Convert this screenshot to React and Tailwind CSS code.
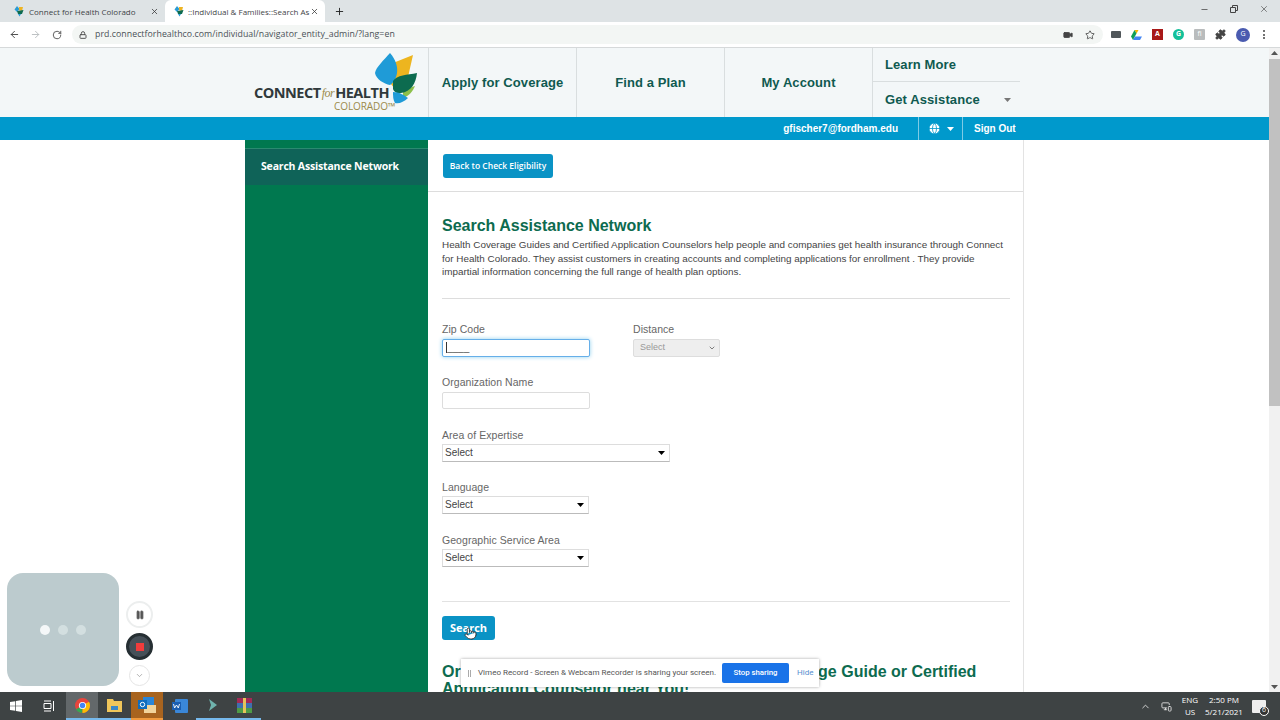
import { ArrowLeft, ArrowRight, RotateCw, Lock, Star, Video, Puzzle, X, Plus, Minus, ChevronUp, ChevronDown, Globe, Pause, MonitorSmartphone, Pointer } from "lucide-react";

const Favicon = () => (
  <svg width="10" height="11" viewBox="0 0 10 11" className="shrink-0">
    <path d="M3 0 L5.5 3 L3 6 L0.5 3.5 Z" fill="#2a9bd3" />
    <path d="M5 1 L9 1 L8 5 L5 4 Z" fill="#eeb422" />
    <path d="M3 5 L9.5 4 L8 8 L4 8 Z" fill="#0d6b50" />
    <path d="M4 8 L7 8 L5.5 10.5 Z" fill="#2a9bd3" />
  </svg>
);

const Logo = () => (
  <div className="relative h-full w-[183px]">
    <svg width="48" height="55" viewBox="0 0 48 55" className="absolute left-[128px] top-[5px]">
      <path d="M20 10 L40 2 L35 24 L22 36 L17 30 Z" fill="#edb51f" />
      <path d="M17 0 C23 7 25 14 24 20 C23 26 20 30 17 32 C11 31 3 26 2 20 C3 14 11 7 17 0 Z" fill="#1f9bd7" />
      <path d="M30 37 L42 33 C40 38 36 43 30 45 Z" fill="#8cc04b" />
      <path d="M20 28 C24 22 34 22 44 20 C43 30 38 39 28 40 C24 41 21 39 20 36 Z" fill="#0c6b4f" />
      <path d="M20 39 C26 39 31 42 35 45 C31 49 26 51 22 50 C20 47 20 43 20 39 Z" fill="#1f9bd7" />
    </svg>
    <div className="absolute left-[9px] top-[36px] flex items-center whitespace-nowrap font-['Open_Sans',sans-serif] text-[14.5px] font-bold leading-[18px] tracking-[-0.5px] text-[#30393b]">
      CONNECT
      <span className="mx-[1px] font-['Liberation_Serif',serif] text-[12px] font-normal italic tracking-[-0.5px] text-[#9b8a4a]">for</span>
      HEALTH
    </div>
    <div className="absolute left-[89px] top-[52px] whitespace-nowrap font-['Open_Sans',sans-serif] text-[10px] font-normal leading-[12px] tracking-[-0.1px] text-[#9b8a4a]">COLORADO™</div>
  </div>
);

const NavItem = ({ children }) => (
  <div className="flex w-[148px] items-center justify-center border-l border-[#d9dedf] text-[13px] font-bold tracking-[0.1px] text-[#0f5a50]">{children}</div>
);

const Caret = ({ className }) => (
  <svg width="7" height="4" viewBox="0 0 7 4" className={className}>
    <path d="M0 0 H7 L3.5 4 Z" fill="currentColor" />
  </svg>
);

const Label = ({ children }) => <div className="text-[10.5px] leading-[13px] tracking-[0.05px] text-[#666]">{children}</div>;

const FakeSelect = ({ width }) => (
  <div className={`mt-[2px] flex h-[18px] ${width} items-center justify-between border border-[#ddd] border-b-[#bbb] bg-white pr-[4px] pl-[2px]`}>
    <span className="pb-[1px] text-[10px] leading-[13px] text-[#444]">Select</span>
    <Caret className="text-black" />
  </div>
);

const ChromeBar = () => (
  <div className="font-['Open_Sans',sans-serif]">
    <div className="flex h-[22px] items-end bg-[#dee3e5] pl-[8px] text-[8px] text-[#5c6063]">
      <div className="flex h-[22px] w-[157px] items-center gap-[5px] pl-[6px] pt-[1px]">
        <Favicon />
        <span className="w-[116px] whitespace-nowrap text-[#3f4447]">Connect for Health Colorado</span>
        <X size={9} strokeWidth={2} className="text-[#333]" />
      </div>
      <div className="flex h-[22px] w-[160px] items-center gap-[4px] rounded-t-[6px] bg-white pl-[9px] pt-[1px]">
        <Favicon />
        <span className="w-[118px] whitespace-nowrap text-[#3f4447]">::Individual &amp; Families::Search As</span>
        <X size={9} strokeWidth={2} className="text-[#333]" />
      </div>
      <Plus size={11} strokeWidth={2} className="mb-[5px] ml-[9px] text-[#222]" />
      <div className="ml-auto flex h-[22px] items-center gap-[21px] pb-[4px] pr-[8px] text-[#444]">
        <Minus size={9} />
        <svg width="8" height="8" viewBox="0 0 8 8" fill="none" stroke="currentColor"><path d="M0.5 2.5 H5.5 V7.5 H0.5 Z M2.5 2.5 V0.5 H7.5 V5.5 H5.5" /></svg>
        <X size={10} strokeWidth={1.5} className="mr-[3px]" />
      </div>
    </div>
    <div className="flex h-[26px] items-center border-b border-[#d6d9da] bg-white pl-[9px] pr-[10px] text-[#5f6368]">
      <ArrowLeft size={11} strokeWidth={2} className="text-[#444]" />
      <ArrowRight size={11} strokeWidth={2} className="ml-[10px] text-[#b8bcbe]" />
      <RotateCw size={10} strokeWidth={2} className="ml-[11px] text-[#444]" />
      <div className="ml-[10px] flex h-[19px] w-[1031px] items-center rounded-full bg-[#f3f6f4] pl-[7px] pr-[8px]">
        <Lock size={8} strokeWidth={3} className="text-[#555]" />
        <span className="ml-[8px] text-[8.75px] tracking-[0.05px] text-[#4a5056]">prd.connectforhealthco.com/individual/navigator_entity_admin/?lang=en</span>
        <Video size={10} fill="currentColor" className="ml-auto text-[#444]" />
        <Star size={10} strokeWidth={2} className="ml-[12px] text-[#444]" />
      </div>
      <div className="ml-[8px] flex items-center gap-[10px]">
        <div className="h-[7px] w-[10px] rounded-[1px] bg-[#50565a]" />
        <svg width="11" height="10" viewBox="0 0 11 10"><path d="M3.5 0 H7.5 L5.5 3.5 Z" fill="#f4b400" /><path d="M3.5 0 L0 6.5 L2 10 L5.5 3.5 Z" fill="#0f9d58" /><path d="M2 10 H9 L11 6.5 H4 Z" fill="#4285f4" /></svg>
        <div className="flex h-[11px] w-[11px] items-center justify-center bg-[#a81818] text-[7px] font-bold text-white">A</div>
        <div className="flex h-[11px] w-[11px] items-center justify-center rounded-full bg-[#14c09a] text-[7px] font-bold text-white">G</div>
        <div className="flex h-[11px] w-[11px] items-center justify-center rounded-[1px] bg-[#b9bcbd] text-[7px] text-white">fi</div>
        <Puzzle size={11} fill="currentColor" className="text-[#444]" />
        <div className="flex h-[14px] w-[14px] items-center justify-center rounded-full bg-[#4a5bb0] text-[7px] text-white">G</div>
        <div className="ml-[3px] flex flex-col gap-[1.5px]">
          <div className="h-[2px] w-[2px] rounded-full bg-[#444]" />
          <div className="h-[2px] w-[2px] rounded-full bg-[#444]" />
          <div className="h-[2px] w-[2px] rounded-full bg-[#444]" />
        </div>
      </div>
    </div>
  </div>
);

const SiteHeader = () => (
  <>
    <div className="h-[69px] bg-[#f3f7f8]">
      <div className="mx-auto flex h-full w-[779px]">
        <Logo />
        <NavItem>Apply for Coverage</NavItem>
        <NavItem>Find a Plan</NavItem>
        <NavItem>My Account</NavItem>
        <div className="flex w-[148px] flex-col border-l border-[#d9dedf] text-[13px] font-bold tracking-[0.1px] text-[#0f5a50]">
          <div className="flex h-[34px] items-center border-b border-[#d9dedf] pl-[12px]">Learn More</div>
          <div className="flex flex-1 items-center justify-between pl-[12px] pr-[9px]">
            Get Assistance
            <Caret className="text-[#777]" />
          </div>
        </div>
      </div>
    </div>
    <div className="h-[23px] bg-[#0099cc] text-[10px] font-bold text-white">
      <div className="mx-auto flex h-full w-[779px] justify-end">
        <div className="flex items-center pr-[20px]">gfischer7@fordham.edu</div>
        <div className="flex w-[44px] items-center gap-[6px] border-l border-[#7fcbe5] pl-[9px]">
          <Globe size={13} fill="#fff" stroke="#0099cc" strokeWidth={1.5} />
          <Caret />
        </div>
        <div className="flex w-[62px] items-center border-l border-[#7fcbe5] pl-[11px]">Sign Out</div>
      </div>
    </div>
  </>
);

const Sidebar = () => (
  <div className="w-[183px] shrink-0 bg-[#00784f] pt-[8px]">
    <div className="flex h-[37px] items-center border-t border-[#2b8a70] bg-[#0f6358] pl-[16px] font-['Open_Sans',sans-serif] text-[10.5px] font-bold tracking-[-0.18px] text-white">
      Search Assistance Network
    </div>
  </div>
);

const Form = () => (
  <div className="min-w-0 flex-1 border-r border-[#e3e3e3]">
    <div className="flex h-[52px] items-start border-b border-[#ddd] pl-[15px] pt-[14px]">
      <button className="h-[24px] w-[110px] rounded-[3px] bg-[#0a93c5] font-['Open_Sans',sans-serif] text-[8.5px] font-semibold text-white">
        Back to Check Eligibility
      </button>
    </div>
    <div className="pl-[14px] pr-[13px]">
      <h1 className="mt-[24px] text-[16px] font-bold leading-[19px] text-[#0d6b4f]">Search Assistance Network</h1>
      <p className="mt-[3px] text-[9.9px] leading-[13.5px] text-[#444]">
        Health Coverage Guides and Certified Application Counselors help people and companies get health insurance through Connect for Health Colorado. They assist customers in creating accounts and completing applications for enrollment . They provide impartial information concerning the full range of health plan options.
      </p>
      <div className="mt-[19px] h-px bg-[#ddd]" />

      <div className="mt-[24px] flex">
        <div className="w-[191px]">
          <Label>Zip Code</Label>
          <div className="mt-[3px] flex h-[18px] w-[148px] items-center rounded-[2px] border border-[#66afe9] bg-white pl-[3px] shadow-[0_0_4px_#8fd0ee]">
            <span className="border-l border-[#333] text-[10px] leading-[11px] text-[#555]">____</span>
          </div>
        </div>
        <div>
          <Label>Distance</Label>
          <div className="mt-[3px] flex h-[18px] w-[87px] items-center justify-between rounded-[2px] border border-[#ddd] bg-[#eee] pl-[6px] pr-[3px] text-[9px] text-[#999]">
            Select
            <ChevronDown size={8} strokeWidth={2.5} className="text-[#666]" />
          </div>
        </div>
      </div>

      <div className="mt-[19px]">
        <Label>Organization Name</Label>
        <div className="mt-[3px] h-[17px] w-[148px] rounded-[2px] border border-[#ddd] bg-white" />
      </div>
      <div className="mt-[20px]">
        <Label>Area of Expertise</Label>
        <FakeSelect width="w-[228px]" />
      </div>
      <div className="mt-[19px]">
        <Label>Language</Label>
        <FakeSelect width="w-[147px]" />
      </div>
      <div className="mt-[20px]">
        <Label>Geographic Service Area</Label>
        <FakeSelect width="w-[147px]" />
      </div>

      <div className="mt-[34px] h-px bg-[#e2e2e2]" />
      <div className="relative mt-[13px] h-[24px] w-[53px]">
        <button className="h-full w-full rounded-[3px] bg-[#0a93c5] font-['Open_Sans',sans-serif] text-[11px] font-bold text-white">Search</button>
        <Pointer size={13} fill="#fff" stroke="#222" strokeWidth={1.5} className="absolute left-[22px] top-[12px]" />
      </div>
      <h2 className="mt-[24px] w-[560px] text-[16px] font-bold leading-[17px] text-[#0d6b4f]">
        Or use our map here to find a local Health Coverage Guide or Certified Application Counselor near You!
      </h2>
    </div>
  </div>
);

const Recorder = () => (
  <div className="absolute left-[7px] top-[573px] flex items-end">
    <div className="flex h-[113px] w-[112px] items-center justify-center gap-[8px] rounded-[16px] bg-[#bccbce]">
      <div className="h-[10px] w-[10px] rounded-full bg-[#f4f7f8]" />
      <div className="h-[10px] w-[10px] rounded-full bg-[#d3dfe0]" />
      <div className="h-[10px] w-[10px] rounded-full bg-[#d3dfe0]" />
    </div>
    <div className="ml-[7px] flex flex-col items-center gap-[5px]">
      <div className="flex h-[27px] w-[27px] items-center justify-center rounded-full border-2 border-[#eceeee] bg-white">
        <Pause size={10} fill="#555" stroke="#555" />
      </div>
      <div className="flex h-[27px] w-[27px] items-center justify-center rounded-full border-[3px] border-[#262f33] bg-[#465058]">
        <div className="h-[8px] w-[8px] bg-[#f03c3c]" />
      </div>
      <div className="flex h-[21px] w-[21px] items-center justify-center rounded-full border border-[#e5e5e5] bg-white">
        <ChevronDown size={9} className="text-[#999]" />
      </div>
    </div>
  </div>
);

const SharingBar = () => (
  <div className="absolute left-[461px] top-[659px] flex h-[28px] w-[358px] items-center bg-white pl-[7px] font-['Roboto',sans-serif] text-[8.05px] text-[#555] shadow-[0_0_3px_rgba(0,0,0,0.35)]">
    <div className="h-[7px] w-[3px] shrink-0 border-x border-[#aaa]" />
    <span className="ml-[7px] w-[244px] shrink-0 whitespace-nowrap">Vimeo Record - Screen &amp; Webcam Recorder is sharing your screen.</span>
    <button className="h-[20px] w-[67px] shrink-0 rounded-[2px] bg-[#1a73e8] text-[7.8px] font-medium text-white">Stop sharing</button>
    <span className="ml-[8px] text-[#5a8fd0]">Hide</span>
  </div>
);

const Taskbar = () => (
  <div className="flex h-[28px] items-center bg-[#3e4344] font-['Open_Sans',sans-serif] text-[8.5px] text-white">
    <div className="flex h-full w-[32px] items-center justify-center">
      <svg width="12" height="12" viewBox="0 0 12 12" fill="#fff"><path d="M0 2 L5.3 1.2 V5.7 H0 Z M6 1.1 L12 0 V5.7 H6 Z M0 6.3 H5.3 V10.8 L0 10 Z M6 6.3 H12 V12 L6 10.9 Z" /></svg>
    </div>
    <div className="flex h-full w-[34px] items-center justify-center">
      <svg width="12" height="12" viewBox="0 0 12 12" fill="none" stroke="#fff"><path d="M1 3.5 H8 V8.5 H1 Z M1 1 H8 M1 11 H8 M10.5 1 V11" /></svg>
    </div>
    <div className="flex h-full w-[32px] items-center justify-center border-b-2 border-[#76b9ed] bg-[#63686a]">
      <svg width="15" height="15" viewBox="0 0 15 15"><circle cx="7.5" cy="7.5" r="7.5" fill="#e8453c" /><path d="M7.5 7.5 L1 11.2 A7.5 7.5 0 0 0 7.5 15 Z" fill="#34a853" /><path d="M7.5 7.5 L14 3.8 A7.5 7.5 0 0 1 7.5 15 Z" fill="#fbbc05" /><circle cx="7.5" cy="7.5" r="3.6" fill="#fff" /><circle cx="7.5" cy="7.5" r="2.7" fill="#4285f4" /></svg>
    </div>
    <div className="flex h-full w-[33px] items-center justify-center border-b-2 border-[#76b9ed]">
      <svg width="15" height="13" viewBox="0 0 15 13"><path d="M0 0 H6 L7 2 H15 V13 H0 Z" fill="#f0c65a" /><rect x="4" y="7" width="7" height="4" fill="#3a87c8" /></svg>
    </div>
    <div className="flex h-full w-[32px] items-center justify-center border-b-2 border-[#f09a3e] bg-[#a8641f]">
      <svg width="18" height="16" viewBox="0 0 18 16"><rect x="5" y="0" width="11" height="9" fill="#2a86d8" /><rect x="6" y="8" width="12" height="8" fill="#f2d49b" /><rect x="0" y="3" width="9" height="9" fill="#0f6cbd" /><circle cx="4.5" cy="7.5" r="2.2" fill="none" stroke="#fff" /></svg>
    </div>
    <div className="flex h-full w-[33px] items-center justify-center">
      <svg width="16" height="14" viewBox="0 0 16 14"><rect x="3" y="0" width="13" height="14" rx="1" fill="#3a87d8" /><rect x="0" y="3" width="9" height="8" fill="#1b5eb0" /><path d="M1.5 5 L2.6 9 L4.5 6 L6.3 9 L7.5 5" stroke="#fff" fill="none" strokeWidth="0.9" /></svg>
    </div>
    <div className="flex h-full w-[32px] items-center justify-center border-b-2 border-[#76b9ed]">
      <svg width="9" height="12" viewBox="0 0 9 12"><path d="M1 0 L9 6 L1 12 L3 6 Z" fill="#6fb3ad" /></svg>
    </div>
    <div className="flex h-full w-[33px] items-center justify-center border-b-2 border-[#76b9ed]">
      <svg width="15" height="15" viewBox="0 0 15 15"><rect y="0" width="15" height="5" fill="#a32a55" /><rect y="5" width="15" height="5" fill="#3f6fb0" /><rect y="10" width="15" height="5" fill="#4f9a45" /><rect x="6" width="3" height="15" fill="#e6c35a" /></svg>
    </div>
    <div className="ml-auto flex items-center">
      <ChevronUp size={11} className="text-[#ddd]" />
      <MonitorSmartphone size={11} className="ml-[10px] text-[#ddd]" />
      <div className="ml-[7px] w-[22px] text-center text-[8px] leading-[12px]">ENG<br />US</div>
      <div className="ml-[4px] w-[38px] text-center text-[8px] leading-[12px]">2:50 PM<br />5/21/2021</div>
      <div className="relative ml-[9px] mr-[14px] h-[13px] w-[14px] rounded-[1px] bg-[#eee]">
        <div className="absolute -bottom-[3px] -right-[3px] flex h-[10px] w-[10px] items-center justify-center rounded-full border border-white bg-[#333] text-[7px]">6</div>
      </div>
    </div>
  </div>
);

export default function App() {
  return (
    <div className="relative flex h-screen flex-col overflow-hidden bg-white font-['Liberation_Sans',sans-serif]">
      <ChromeBar />
      <div className="flex min-h-0 flex-1">
        <div className="min-w-0 flex-1 overflow-hidden">
          <SiteHeader />
          <div className="mx-auto flex min-h-[560px] w-[779px]">
            <Sidebar />
            <Form />
          </div>
        </div>
        <div className="flex w-[11px] shrink-0 flex-col items-center bg-[#f1f1f1]">
          <Caret className="mt-[3px] rotate-180 text-[#555]" />
          <div className="mt-[4px] h-[347px] w-full bg-[#c1c1c1]" />
          <Caret className="mt-auto mb-[3px] text-[#555]" />
        </div>
      </div>
      <Taskbar />
      <Recorder />
      <SharingBar />
    </div>
  );
}
